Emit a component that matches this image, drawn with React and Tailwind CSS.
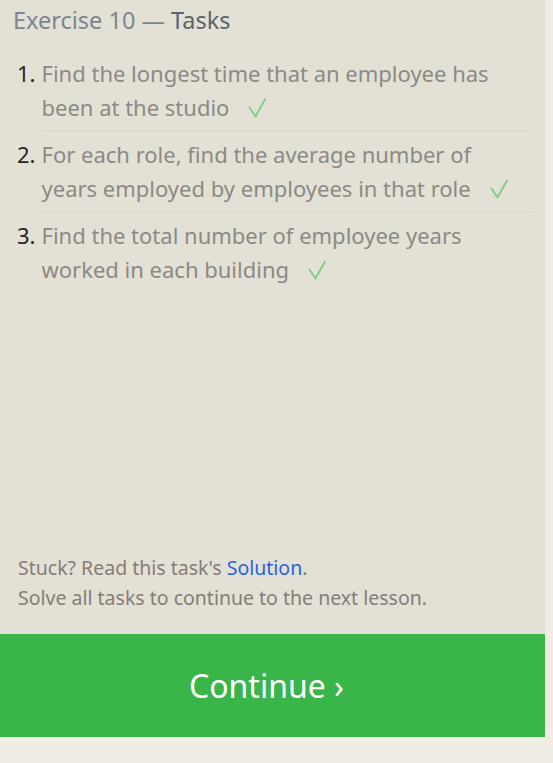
import React from "react";

const tasks = [
  ["Find the longest time that an employee has", "been at the studio"],
  ["For each role, find the average number of", "years employed by employees in that role"],
  ["Find the total number of employee years", "worked in each building"],
];

const Check = () => (
  <svg
    viewBox="0 0 18 20"
    className="ml-[19px] inline-block h-[20px] w-[18px] align-[-2px]"
    fill="none"
    stroke="#80cd82"
    strokeWidth="1.8"
    strokeLinecap="round"
    strokeLinejoin="round"
  >
    <path d="M1.5 9.5 L7.5 18.5 L17 1.5" />
  </svg>
);

const App = () => {
  return (
    <div
      className="min-h-screen w-full bg-[#f0ede5]"
      style={{ fontFamily: '"Noto Sans", "Open Sans", sans-serif' }}
    >
      <div className="flex h-[737px] w-[545px] flex-col bg-[#e3e0d5]">
        <div className="flex-1 pt-[4px]">
          <h2 className="pl-[13px] text-[23.5px] leading-[32px] text-[#7d8590]">
            Exercise 10 — <span className="text-[#5a6472]">Tasks</span>
          </h2>
          <ol className="mt-[14px] pl-[17px] pr-[12px]">
            {tasks.map((lines, i) => (
              <li key={i} className="flex">
                <span className="w-[24.5px] shrink-0 pt-[6px] text-[22px] leading-[34px] text-[#262626]">
                  {i + 1}.
                </span>
                <div
                  className={
                    "flex-1 py-[6px] text-[22px] leading-[34px] text-[#8b8a86] " +
                    (i < tasks.length - 1 ? "border-b border-[#d7d4ca]" : "")
                  }
                >
                  {lines[0]}
                  <br />
                  {lines[1]}
                  <Check />
                </div>
              </li>
            ))}
          </ol>
        </div>
        <div className="pb-[21px] pl-[18px] text-[19.5px] leading-[30px] text-[#867d77]">
          <p>
            Stuck? Read this task's <a className="text-[#2a62e3]">Solution</a>.
          </p>
          <p>Solve all tasks to continue to the next lesson.</p>
        </div>
        <button className="flex h-[103px] w-full items-center justify-center bg-[#3ab54a] pr-[12px] text-[32px] text-white">
          Continue ›
        </button>
      </div>
    </div>
  );
};

export default App;
